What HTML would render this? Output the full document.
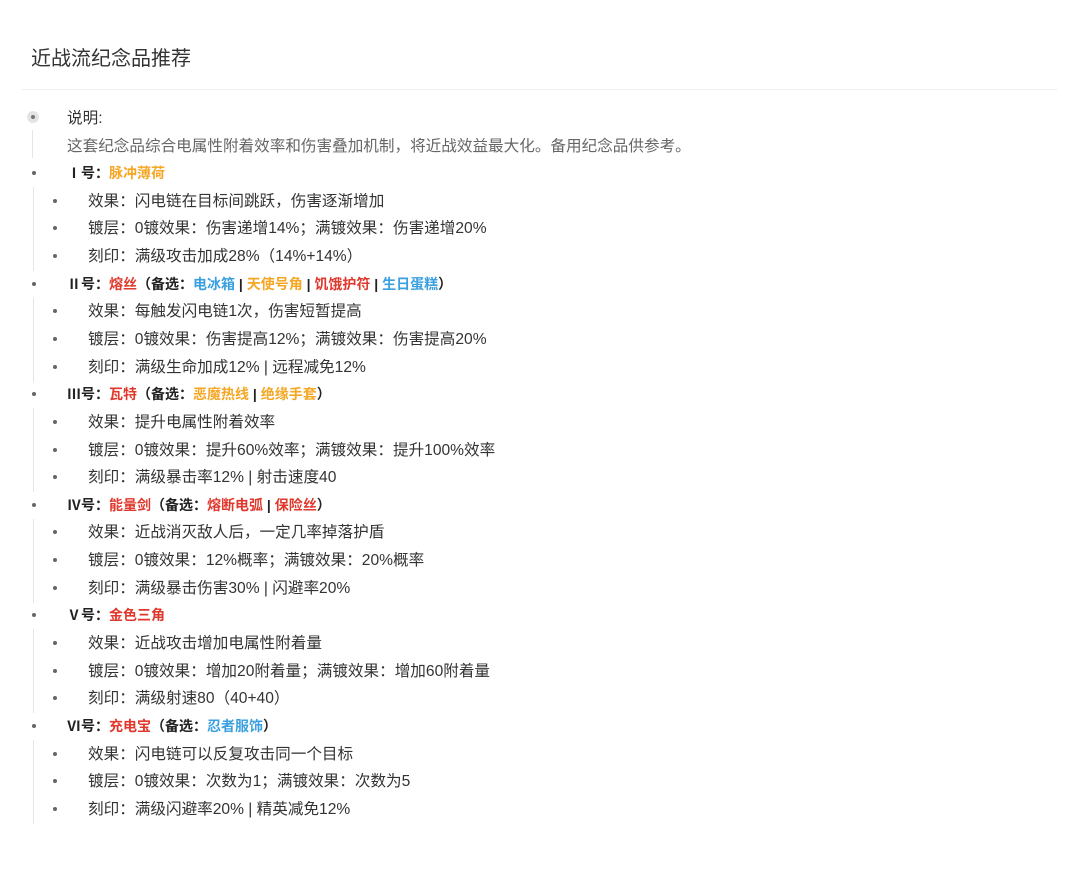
<!DOCTYPE html>
<html><head><meta charset="utf-8"><style>
body{margin:0;width:1080px;height:896px;background:#fff;font-family:"Liberation Sans","Noto Sans CJK SC",sans-serif;color:#333;position:relative;overflow:hidden}
.t{position:absolute;left:31px;top:42px;font-size:20px;color:#333}
.hr{position:absolute;left:22px;top:89px;width:1035px;height:1px;background:#eee}
.r{position:absolute;font-size:15.6px;line-height:20px;white-space:nowrap}
.m{left:67px;font-size:14px}.s{left:88px}
.b{position:absolute;width:4px;height:4px;border-radius:2px;background:#666}
.v{position:absolute;width:1px;background:#e5e5e5}
b{font-weight:bold;color:#222}
.o{color:#f5a623;font-weight:bold}.rd{color:#e0382c;font-weight:bold}.bl{color:#3aa0e0;font-weight:bold}
</style></head><body>
<div class="t">近战流纪念品推荐</div>
<div class="hr"></div>
<div style="position:absolute;left:27px;top:111px;width:12px;height:12px;border-radius:6px;background:#e4e4e4"></div>
<div class="b" style="left:31px;top:115px;background:#777"></div>
<div class="r" style="left:67px;top:109px">说明:</div>
<div class="v" style="left:32px;top:130px;height:28px"></div>
<div class="r" style="left:67px;top:137px;color:#666">这套纪念品综合电属性附着效率和伤害叠加机制，将近战效益最大化。备用纪念品供参考。</div>

<div id="L"></div>
<script>
var rows=[
['m','<b>Ⅰ号：</b><span class="o">脉冲薄荷</span>'],
['s','效果：闪电链在目标间跳跃，伤害逐渐增加'],
['s','镀层：0镀效果：伤害递增14%；满镀效果：伤害递增20%'],
['s','刻印：满级攻击加成28%（14%+14%）'],
['m','<b>Ⅱ号：</b><span class="rd">熔丝</span><b>（备选：</b><span class="bl">电冰箱</span><b> | </b><span class="o">天使号角</span><b> | </b><span class="rd">饥饿护符</span><b> | </b><span class="bl">生日蛋糕</span><b>）</b>'],
['s','效果：每触发闪电链1次，伤害短暂提高'],
['s','镀层：0镀效果：伤害提高12%；满镀效果：伤害提高20%'],
['s','刻印：满级生命加成12% | 远程减免12%'],
['m','<b>Ⅲ号：</b><span class="rd">瓦特</span><b>（备选：</b><span class="o">恶魔热线</span><b> | </b><span class="o">绝缘手套</span><b>）</b>'],
['s','效果：提升电属性附着效率'],
['s','镀层：0镀效果：提升60%效率；满镀效果：提升100%效率'],
['s','刻印：满级暴击率12% | 射击速度40'],
['m','<b>Ⅳ号：</b><span class="rd">能量剑</span><b>（备选：</b><span class="rd">熔断电弧</span><b> | </b><span class="rd">保险丝</span><b>）</b>'],
['s','效果：近战消灭敌人后，一定几率掉落护盾'],
['s','镀层：0镀效果：12%概率；满镀效果：20%概率'],
['s','刻印：满级暴击伤害30% | 闪避率20%'],
['m','<b>Ⅴ号：</b><span class="rd">金色三角</span>'],
['s','效果：近战攻击增加电属性附着量'],
['s','镀层：0镀效果：增加20附着量；满镀效果：增加60附着量'],
['s','刻印：满级射速80（40+40）'],
['m','<b>Ⅵ号：</b><span class="rd">充电宝</span><b>（备选：</b><span class="bl">忍者服饰</span><b>）</b>'],
['s','效果：闪电链可以反复攻击同一个目标'],
['s','镀层：0镀效果：次数为1；满镀效果：次数为5'],
['s','刻印：满级闪避率20% | 精英减免12%']];
var h='';
for(var i=0;i<rows.length;i++){
 var y=173+i*27.65;
 var m=rows[i][0]=='m';
 h+='<div class="b" style="left:'+(m?32:53)+'px;top:'+(y-2)+'px"></div>';
 h+='<div class="r '+rows[i][0]+'" style="top:'+(y-(m?10:9))+'px">'+rows[i][1]+'</div>';
 if(m) h+='<div class="v" style="left:33px;top:'+(y+14)+'px;height:84px"></div>';
}
document.getElementById('L').innerHTML=h;
</script>
</body></html>
